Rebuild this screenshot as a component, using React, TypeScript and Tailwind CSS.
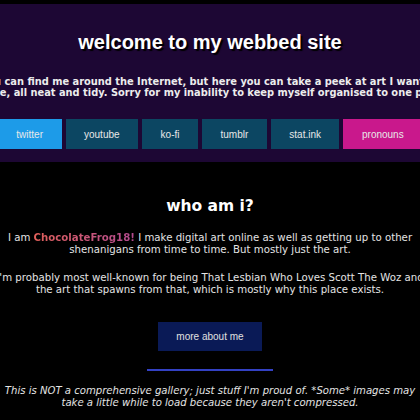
import React from 'react';

const links = [
  { label: 'twitter', color: 'bg-[#1d9be8]' },
  { label: 'youtube', color: 'bg-[#0c4662]' },
  { label: 'ko-fi', color: 'bg-[#0c4662]' },
  { label: 'tumblr', color: 'bg-[#0c4662]' },
  { label: 'stat.ink', color: 'bg-[#0c4662]' },
  { label: 'pronouns', color: 'bg-[#c9188c]' },
];

export default function App() {
  return (
    <div className="min-h-[420px] bg-black overflow-hidden text-[#e6e6e6]">
      <div className="h-[4px] bg-black" />
      <header className="bg-[#1d0734] pt-[26px] pb-[13px] flex flex-col items-center">
        <h1 className="text-[20px] font-bold text-white font-['Liberation_Sans',Arial,sans-serif] leading-[24px] [text-shadow:2px_2px_1px_#000]">
          welcome to my webbed site
        </h1>
        <div className="mt-[22px] w-full flex justify-center">
          <p className="shrink-0 w-[700px] text-center font-bold text-[9.85px] leading-[11px] font-['DejaVu_Sans',Verdana,sans-serif] text-[#ececec]">
            You can find me around the Internet, but here you can take a peek at art I want to
            <br />
            one place, all neat and tidy. Sorry for my inability to keep myself organised to one platform.
          </p>
        </div>
        <nav className="mt-[21px] w-full flex justify-center">
          <div className="shrink-0 flex gap-[4px]">
            {links.map((l) => (
              <a
                key={l.label}
                className={`${l.color} h-[30px] px-[18.5px] flex items-center text-[10px] text-[#e8e8e8] font-['Liberation_Sans',Arial,sans-serif]`}
              >
                {l.label}
              </a>
            ))}
          </div>
        </nav>
      </header>

      <main className="flex flex-col items-center pt-[35px]">
        <h2 className="text-[15.5px] leading-[18px] font-bold text-white font-['DejaVu_Sans',Verdana,sans-serif]">
          who am i?
        </h2>
        <div className="mt-[17px] w-full flex justify-center">
          <div className="shrink-0 w-[480px] text-center text-[10.2px] leading-[12px] font-['DejaVu_Sans',Verdana,sans-serif] text-[#e4e4e4]">
            <p>
              I am{' '}
              <span className="font-bold bg-gradient-to-r from-[#e2605a] to-[#b2498e] bg-clip-text text-transparent">
                ChocolateFrog18!
              </span>{' '}
              I make digital art online as well as getting up to other
              <br />
              shenanigans from time to time. But mostly just the art.
            </p>
            <p className="mt-[16px]">
              I'm probably most well-known for being That Lesbian Who Loves Scott The Woz and
              <br />
              the art that spawns from that, which is mostly why this place exists.
            </p>
          </div>
        </div>
        <a className="mt-[26px] h-[29px] px-[18.5px] flex items-center bg-[#0a1a56] text-[10px] text-[#e0e0e0] font-['Liberation_Sans',Arial,sans-serif]">
          more about me
        </a>
        <hr className="mt-[18px] w-[126px] border-0 h-[2px] bg-[#3341c4]" />
        <div className="mt-[14px] w-full flex justify-center">
          <p className="shrink-0 w-[480px] text-center italic text-[10.1px] leading-[12px] font-['DejaVu_Sans',Verdana,sans-serif] text-[#e4e4e4]">
            This is NOT a comprehensive gallery; just stuff I'm proud of. *Some* images may
            <br />
            take a little while to load because they aren't compressed.
          </p>
        </div>
      </main>
    </div>
  );
}
